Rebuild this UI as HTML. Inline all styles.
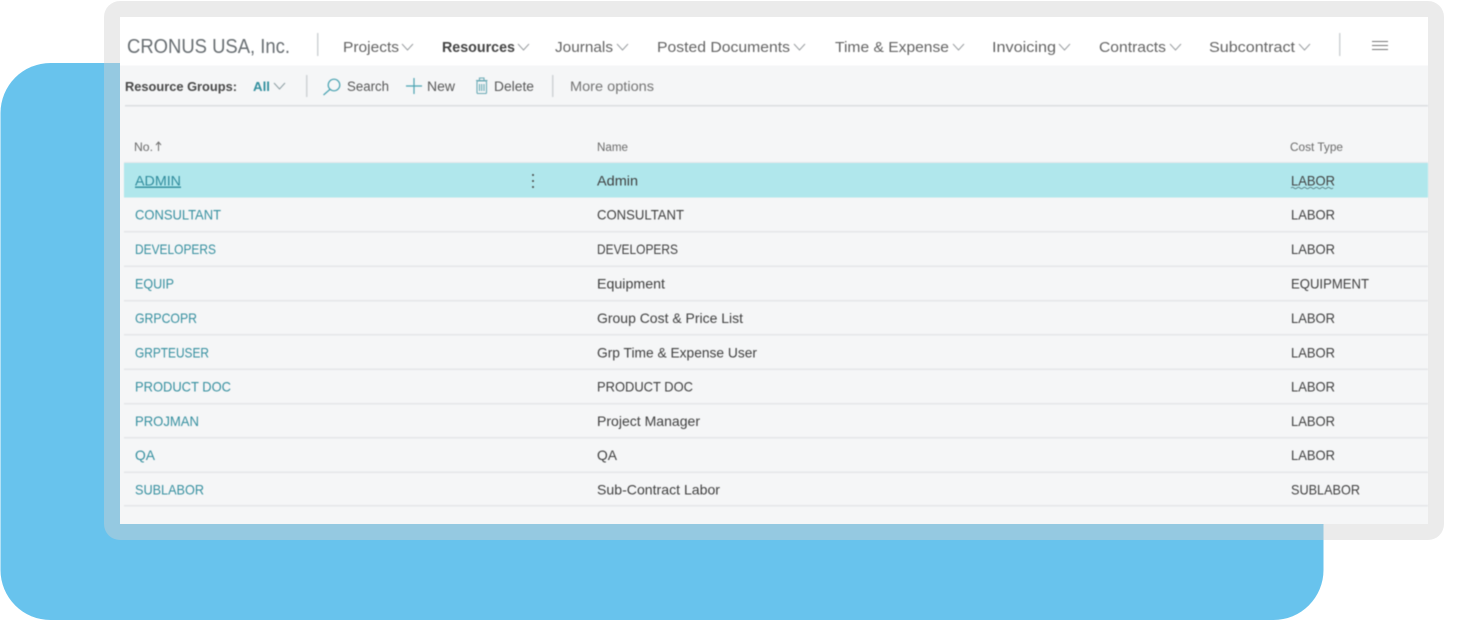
<!DOCTYPE html>
<html lang="en">
<head>
<meta charset="utf-8">
<title>Resource Groups</title>
<style>
html,body{margin:0;padding:0;background:#fff;width:1470px;height:621px;overflow:hidden}
svg{display:block}
text{font-family:"Liberation Sans",Arial,sans-serif;}
.soft{filter:blur(.4px)}
.nav{font-size:15px;fill:#646464}
.tb{font-size:13.5px;fill:#585858}
.th{font-size:11.5px;fill:#6a6a6a}
.l{font-size:14px;fill:#358f9f}
.c{font-size:14px;fill:#404040}
</style>
</head>
<body>
<svg width="1470" height="621" viewBox="0 0 1470 621" xmlns="http://www.w3.org/2000/svg">
<rect x="0.500" y="63" width="1323" height="557" rx="50" ry="50" fill="#68c3ed"/>
<path fill-rule="evenodd" fill="rgb(208,208,208)" fill-opacity=".43" d="M120 1H1428a16 16 0 0 1 16 16V524a16 16 0 0 1-16 16H120a16 16 0 0 1-16-16V17a16 16 0 0 1 16-16ZM120 17V524H1428V17Z"/>
<rect x="120" y="17" width="1308" height="507" fill="#f5f6f7"/>
<rect x="120" y="17" width="1308" height="48.500" fill="#ffffff"/>
<g class="soft">
<text x="127" y="53" font-size="20" fill="#686e72" textLength="163" lengthAdjust="spacingAndGlyphs">CRONUS USA, Inc.</text>
<rect x="317" y="33" width="1.500" height="23" fill="#cfd3d6"/>
<rect x="1339" y="33" width="1.500" height="23" fill="#cfd3d6"/>
<text class="nav" x="343" y="52" textLength="56" lengthAdjust="spacingAndGlyphs">Projects</text>
<text class="nav" x="442" y="52" textLength="73" lengthAdjust="spacingAndGlyphs" font-weight="700" style="fill:#444">Resources</text>
<text class="nav" x="555" y="52" textLength="58" lengthAdjust="spacingAndGlyphs">Journals</text>
<text class="nav" x="657" y="52" textLength="133" lengthAdjust="spacingAndGlyphs">Posted Documents</text>
<text class="nav" x="835" y="52" textLength="114" lengthAdjust="spacingAndGlyphs">Time &amp; Expense</text>
<text class="nav" x="992" y="52" textLength="64" lengthAdjust="spacingAndGlyphs">Invoicing</text>
<text class="nav" x="1099" y="52" textLength="67" lengthAdjust="spacingAndGlyphs">Contracts</text>
<text class="nav" x="1209" y="52" textLength="86" lengthAdjust="spacingAndGlyphs">Subcontract</text>
<g fill="none" stroke="#9a9ea1" stroke-width="1">
<path d="M402 44l5.500 6 5.500-6"/>
<path d="M518 44l5.500 6 5.500-6"/>
<path d="M617 44l5.500 6 5.500-6"/>
<path d="M794 44l5.500 6 5.500-6"/>
<path d="M953 44l5.500 6 5.500-6"/>
<path d="M1059 44l5.500 6 5.500-6"/>
<path d="M1170 44l5.500 6 5.500-6"/>
<path d="M1299 44l5.500 6 5.500-6"/>
<path d="M1372 41.500h16M1372 45.500h16M1372 49.500h16" stroke="#777"/>
</g>
<text x="125" y="91" font-size="13" font-weight="700" fill="#484848" textLength="112" lengthAdjust="spacingAndGlyphs">Resource Groups:</text>
<text x="253" y="91" font-size="13" font-weight="700" fill="#33909f" textLength="17" lengthAdjust="spacingAndGlyphs">All</text>
<path d="M274 83l5.500 6 5.500-6" fill="none" stroke="#8d9ea3" stroke-width="1"/>
<rect x="306" y="75" width="1.500" height="22" fill="#cfd3d6"/>
<rect x="552" y="75" width="1.500" height="22" fill="#cfd3d6"/>
<g fill="none" stroke="#4aa3b2" stroke-width="1.200">
<circle cx="334" cy="85" r="5.800"/>
<path d="M329.800 89.500L323.500 95"/>
<path d="M406 86h16M414 78v16"/>
</g>
<g fill="none" stroke="#6aaab5" stroke-width="1.100">
<rect x="477" y="81" width="9.500" height="12.500" rx="1"/>
<path d="M476 80.500h11.500M479.500 80v-2h4.500v2M479.500 84v7M481.700 84v7M484 84v7"/>
</g>
<text class="tb" x="347" y="91" textLength="42" lengthAdjust="spacingAndGlyphs">Search</text>
<text class="tb" x="427" y="91" textLength="28" lengthAdjust="spacingAndGlyphs">New</text>
<text class="tb" x="494" y="91" textLength="40" lengthAdjust="spacingAndGlyphs">Delete</text>
<text class="tb" x="570" y="91" textLength="84" lengthAdjust="spacingAndGlyphs" style="fill:#747474">More options</text>
<rect x="125" y="105" width="1303" height="1.500" fill="#dadde1"/>
<text class="th" x="134" y="151" textLength="19" lengthAdjust="spacingAndGlyphs">No.</text>
<path d="M158.500 151v-8.500M156 145l2.500-3 2.500 3" fill="none" stroke="#707070" stroke-width="1"/>
<text class="th" x="597" y="151" textLength="31" lengthAdjust="spacingAndGlyphs">Name</text>
<text class="th" x="1290" y="151" textLength="53" lengthAdjust="spacingAndGlyphs">Cost Type</text>
<rect x="124" y="163" width="1304" height="34.500" fill="#b0e7ec"/>
<g fill="#e4e6e9">
<rect x="124" y="162" width="1304" height="1"/>
<rect x="124" y="231" width="1304" height="1.500"/>
<rect x="124" y="265.500" width="1304" height="1.500"/>
<rect x="124" y="300" width="1304" height="1.500"/>
<rect x="124" y="334" width="1304" height="1.500"/>
<rect x="124" y="368.500" width="1304" height="1.500"/>
<rect x="124" y="403" width="1304" height="1.500"/>
<rect x="124" y="437" width="1304" height="1.500"/>
<rect x="124" y="471.500" width="1304" height="1.500"/>
<rect x="124" y="505" width="1304" height="1.500"/>
</g>
<text class="l" x="135" y="185.500" textLength="46" lengthAdjust="spacingAndGlyphs" text-decoration="underline" style="fill:#2f8b9c">ADMIN</text>
<circle cx="533" cy="175" r="1" fill="#444"/><circle cx="533" cy="181" r="1" fill="#444"/><circle cx="533" cy="187" r="1" fill="#444"/>
<text class="c" x="597" y="185.500" textLength="41" lengthAdjust="spacingAndGlyphs">Admin</text>
<text class="c" x="1291" y="185.500" textLength="44" lengthAdjust="spacingAndGlyphs">LABOR</text>
<path d="M1291 188q1.500-1.500 3 0t3 0 3 0 3 0 3 0 3 0 3 0 3 0 3 0 3 0 3 0 3 0 3 0 3 0" fill="none" stroke="#4a6a70" stroke-width=".8"/>

<text class="l" x="135" y="219.700" textLength="86" lengthAdjust="spacingAndGlyphs">CONSULTANT</text>
<text class="c" x="597" y="219.700" textLength="87" lengthAdjust="spacingAndGlyphs">CONSULTANT</text>
<text class="c" x="1291" y="219.700" textLength="44" lengthAdjust="spacingAndGlyphs">LABOR</text>

<text class="l" x="135" y="254" textLength="81" lengthAdjust="spacingAndGlyphs">DEVELOPERS</text>
<text class="c" x="597" y="254" textLength="81" lengthAdjust="spacingAndGlyphs">DEVELOPERS</text>
<text class="c" x="1291" y="254" textLength="44" lengthAdjust="spacingAndGlyphs">LABOR</text>

<text class="l" x="135" y="288.500" textLength="39" lengthAdjust="spacingAndGlyphs">EQUIP</text>
<text class="c" x="597" y="288.500" textLength="68" lengthAdjust="spacingAndGlyphs">Equipment</text>
<text class="c" x="1291" y="288.500" textLength="78" lengthAdjust="spacingAndGlyphs">EQUIPMENT</text>

<text class="l" x="135" y="323" textLength="62" lengthAdjust="spacingAndGlyphs">GRPCOPR</text>
<text class="c" x="597" y="323" textLength="146" lengthAdjust="spacingAndGlyphs">Group Cost &amp; Price List</text>
<text class="c" x="1291" y="323" textLength="44" lengthAdjust="spacingAndGlyphs">LABOR</text>

<text class="l" x="135" y="357.300" textLength="74" lengthAdjust="spacingAndGlyphs">GRPTEUSER</text>
<text class="c" x="597" y="357.300" textLength="160" lengthAdjust="spacingAndGlyphs">Grp Time &amp; Expense User</text>
<text class="c" x="1291" y="357.300" textLength="44" lengthAdjust="spacingAndGlyphs">LABOR</text>

<text class="l" x="135" y="391.700" textLength="96" lengthAdjust="spacingAndGlyphs">PRODUCT DOC</text>
<text class="c" x="597" y="391.700" textLength="96" lengthAdjust="spacingAndGlyphs">PRODUCT DOC</text>
<text class="c" x="1291" y="391.700" textLength="44" lengthAdjust="spacingAndGlyphs">LABOR</text>

<text class="l" x="135" y="426" textLength="64" lengthAdjust="spacingAndGlyphs">PROJMAN</text>
<text class="c" x="597" y="426" textLength="103" lengthAdjust="spacingAndGlyphs">Project Manager</text>
<text class="c" x="1291" y="426" textLength="44" lengthAdjust="spacingAndGlyphs">LABOR</text>

<text class="l" x="135" y="460" textLength="20" lengthAdjust="spacingAndGlyphs">QA</text>
<text class="c" x="597" y="460" textLength="20" lengthAdjust="spacingAndGlyphs">QA</text>
<text class="c" x="1291" y="460" textLength="44" lengthAdjust="spacingAndGlyphs">LABOR</text>

<text class="l" x="135" y="494.500" textLength="69" lengthAdjust="spacingAndGlyphs">SUBLABOR</text>
<text class="c" x="597" y="494.500" textLength="123" lengthAdjust="spacingAndGlyphs">Sub-Contract Labor</text>
<text class="c" x="1291" y="494.500" textLength="69" lengthAdjust="spacingAndGlyphs">SUBLABOR</text>
</g>
</svg>
</body>
</html>
